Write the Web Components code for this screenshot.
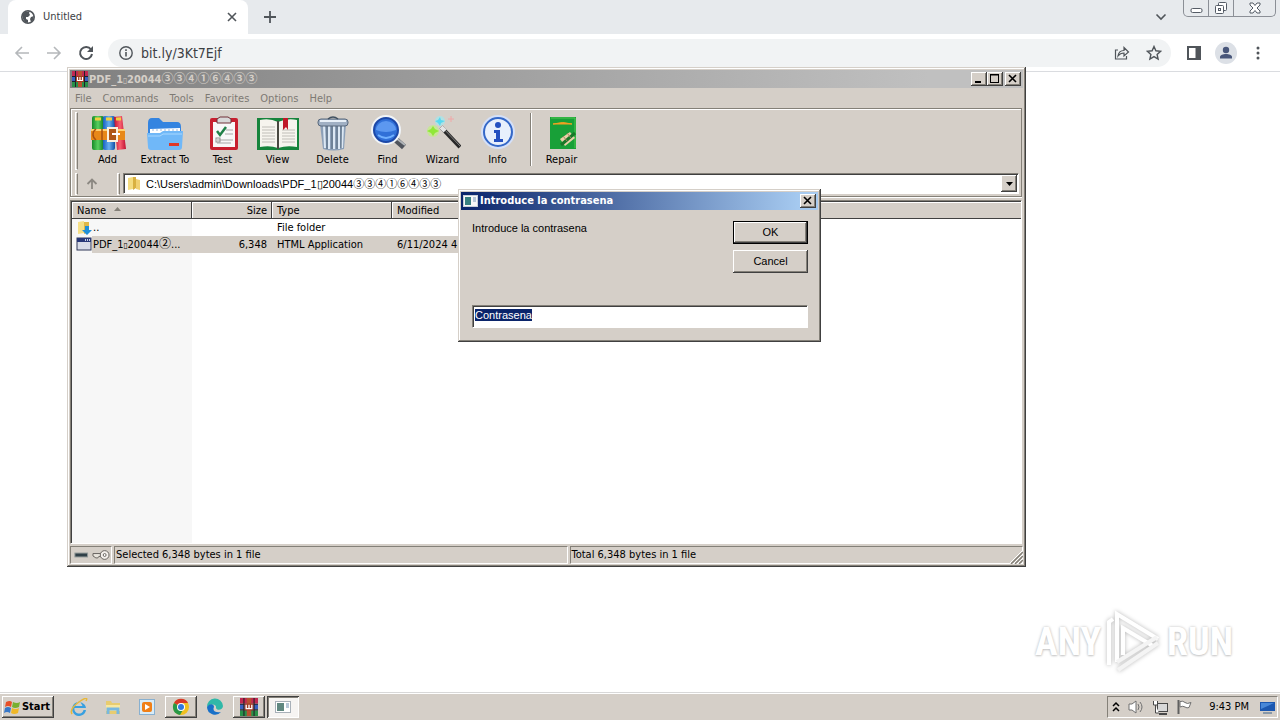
<!DOCTYPE html>
<html lang="en">
<head>
<meta charset="utf-8">
<title>Desktop</title>
<style>
  :root {
    --face: #d5cfc8;
    --shade: #848078;
    --dark: #404040;
    --ui: "DejaVu Sans Condensed", "Noto Sans", "Noto Sans CJK JP", sans-serif;
    --dialog: "Liberation Sans", Arial, sans-serif;
  }
  html, body { height: 100%; margin: 0; }
  body { font: 11px/14px var(--ui); color: #000; background: #fff; overflow: hidden; }
</style>
</head>
<body>
<desk-top>
  <browser-bar slot="browser"></browser-bar>
  <any-run></any-run>
  <archive-window></archive-window>
  <password-dialog></password-dialog>
  <task-bar slot="taskbar"></task-bar>
</desk-top>

<script>
const define = (name, html, ready) => {
  const t = document.createElement('template');
  t.innerHTML = html;
  customElements.define(name, class extends HTMLElement {
    constructor() {
      super();
      this.attachShadow({ mode: 'open' }).append(t.content.cloneNode(true));
    }
    connectedCallback() { if (ready) ready(this, this.shadowRoot); }
  });
};

const raised = 'box-shadow: inset -1px -1px var(--dark), inset 1px 1px #fff, inset -2px -2px var(--shade);';
const books = (size) => `<svg width="${size}" height="${size}" viewBox="0 0 16 16" aria-hidden="true">
  <path d="M0 0h16v5H0z" fill="#c02850"/><path d="M0 5.500h16v4.500H0z" fill="#3860c0"/><path d="M0 11h16v5H0z" fill="#289048"/>
  <path d="M0 5.500h16M0 10.500h16" stroke="#182030"/><path d="M3.500 0v16M12.500 0v16" stroke="#202028"/><path d="M6 0h4v16H6z" fill="#b85030"/><path d="M4 5h8v6H4z" fill="#a03820"/><path d="M5.500 6v3.500h5V6M8 6v3" stroke="#fff" stroke-width="1.200" fill="none"/></svg>`;

define('desk-top', `
<style>
  :host { display: flex; flex-direction: column; position: relative; height: 100%; min-height: 600px; }
  .work { flex: 1; }
</style>
<slot name="browser"></slot><main class="work"><slot></slot></main><slot name="taskbar"></slot>`);

define('browser-bar', `
<style>
  :host { display: block; color: #3c4043; border-bottom: 1px solid #dadce0; }
  button { border: 0; padding: 0; background: none; display: grid; place-items: center; }
  .tabs { display: flex; align-items: stretch; height: 34px; background: #e7eaed; padding-left: 8px; }
  .tab { flex: 0 1 240px; display: flex; align-items: center; gap: 8px; box-sizing: border-box; padding: 0 10px 0 13px; background: #fff; border-radius: 8px 8px 0 0; }
  .tab span { flex: 1; }
  .add { width: 44px; }
  .spacer { flex: 1; }
  .list { width: 44px; }
  .controls { display: flex; align-self: flex-start; height: 16px; margin: 0 4px 0 0; border: 1px solid #8b8f96; border-top: 0; border-radius: 0 0 5px 5px; }
  .controls button { width: 25px; height: 16px; border-right: 1px solid #8b8f96; }
  .controls button:last-child { width: 41px; border: 0; }
  .bar { display: flex; align-items: center; height: 37px; padding: 0 6px 0 10px; }
  .nav { width: 24px; height: 28px; margin-right: 8px; }
  .omni { flex: 1; display: flex; align-items: center; height: 28px; border-radius: 14px; background: #f1f3f4; margin: 0 7px 0 2px; padding: 0 1px 0 10px; }
  .omni input { flex: 1; min-width: 0; border: 0; outline: 0; background: none; padding: 0 0 0 7px; font: 14px/20px var(--ui); color: #3c4043; }
  .omni button { width: 32px; }
  .tool { width: 32px; height: 28px; }
</style>
<nav class="tabs">
  <div class="tab">
    <svg width="14" height="14" viewBox="0 0 14 14"><circle cx="7" cy="7" r="6.200" fill="#fff" stroke="#50555a" stroke-width="1.600"/><path d="M1 5l3-3 5-1-1 2 1 2-2 2H5v2l2 1v3l-3-1-2-3zM13 6l-3 1-1 2 1 3 2-2z" fill="#50555a"/></svg>
    <span>Untitled</span>
    <button aria-label="Close tab"><svg width="12" height="12" viewBox="0 0 12 12"><path d="M2 2l8 8M10 2l-8 8" stroke="#50555a" stroke-width="1.600"/></svg></button>
  </div>
  <button class="add" aria-label="New tab"><svg width="14" height="14" viewBox="0 0 14 14"><path d="M7 1v12M1 7h12" stroke="#50555a" stroke-width="1.800"/></svg></button>
  <div class="spacer"></div>
  <button class="list" aria-label="Search tabs"><svg width="12" height="8" viewBox="0 0 12 8"><path d="M1.500 1.500L6 6l4.500-4.500" fill="none" stroke="#50555a" stroke-width="1.600"/></svg></button>
  <div class="controls">
    <button aria-label="Minimize"><svg width="13" height="12" viewBox="0 0 13 12"><rect x="1" y="6.500" width="11" height="4" rx="1.500" fill="#fff" stroke="#555c66"/></svg></button>
    <button aria-label="Restore"><svg width="14" height="14" viewBox="0 0 14 14"><rect x="4.500" y="1.500" width="8" height="8" rx="1" fill="#fff" stroke="#555c66"/><rect x="1.500" y="4.500" width="8" height="8" rx="1" fill="#fff" stroke="#555c66"/><rect x="4.500" y="7.500" width="2" height="2" fill="#fff" stroke="#555c66"/></svg></button>
    <button aria-label="Close"><svg width="14" height="12" viewBox="0 0 14 12"><path d="M2 1h3l2 2.500L9 1h3v2L9 6l3 3v2H9L7 8.500 5 11H2V9l3-3-3-3z" fill="#fff" stroke="#555c66"/></svg></button>
  </div>
</nav>
<div class="bar">
  <button class="nav" aria-label="Back"><svg width="16" height="16" viewBox="0 0 16 16"><path d="M15 8H2M8 2L2 8l6 6" fill="none" stroke="#b5b8bb" stroke-width="1.600"/></svg></button>
  <button class="nav" aria-label="Forward"><svg width="16" height="16" viewBox="0 0 16 16"><path d="M1 8h13M8 2l6 6-6 6" fill="none" stroke="#b5b8bb" stroke-width="1.600"/></svg></button>
  <button class="nav" aria-label="Reload"><svg width="16" height="16" viewBox="0 0 16 16"><path d="M13 4.500A6 6 0 1 0 14 9" fill="none" stroke="#50555a" stroke-width="2"/><path d="M15 1v6H9z" fill="#50555a"/></svg></button>
  <div class="omni">
    <svg width="16" height="16" viewBox="0 0 16 16"><circle cx="8" cy="8" r="6.200" fill="none" stroke="#50555a" stroke-width="1.400"/><path d="M8 7v4.500M8 4.300v1.600" stroke="#50555a" stroke-width="1.600"/></svg>
    <input aria-label="Address" value="bit.ly/3Kt7Ejf">
    <button aria-label="Share"><svg width="16" height="16" viewBox="0 0 16 16"><path d="M4 5H1.500v9h11v-3" fill="none" stroke="#50555a" stroke-width="1.200"/><path d="M4 11c.5-4 3-5.500 6-5.500V2.500L14.500 7 10 11V8c-3 0-4.500 1-6 3z" fill="none" stroke="#50555a" stroke-width="1.200"/></svg></button>
    <button aria-label="Bookmark"><svg width="16" height="16" viewBox="0 0 16 16"><path d="M8 1.500l1.900 4.300 4.700.5-3.500 3.100 1 4.600L8 11.600 3.900 14l1-4.600L1.400 6.300l4.700-.5z" fill="none" stroke="#50555a" stroke-width="1.400"/></svg></button>
  </div>
  <button class="tool" aria-label="Side panel"><svg width="14" height="14" viewBox="0 0 14 14"><rect x="1" y="1" width="12" height="12" fill="#fff" stroke="#50555a" stroke-width="2"/><path d="M8.500 1H13v12H8.500z" fill="#50555a"/></svg></button>
  <button class="tool" aria-label="Profile"><svg width="22" height="22" viewBox="0 0 22 22"><circle cx="11" cy="11" r="11" fill="#dce0e6"/><circle cx="11" cy="8" r="3.200" fill="#48567a"/><path d="M5 16.500v-1.500c0-4 12-4 12 0v1.500z" fill="#48567a"/></svg></button>
  <button class="tool" aria-label="Menu"><svg width="4" height="16" viewBox="0 0 4 16"><g fill="#50555a"><circle cx="2" cy="3" r="1.500"/><circle cx="2" cy="8" r="1.500"/><circle cx="2" cy="13" r="1.500"/></g></svg></button>
</div>`);

define('caption-button', `
<style>
  :host { display: block; }
  button { display: grid; place-items: center; width: 16px; height: 14px; padding: 0 1px 1px 0; border: 0; background: var(--face); ${raised} }
</style>
<button><svg width="9" height="9" viewBox="0 0 9 9"><path fill="none" stroke="#000"/></svg></button>`,
(el, root) => {
  const kind = el.getAttribute('kind');
  const p = root.querySelector('path');
  p.setAttribute('d', { min: 'M1 8h6', max: 'M0 1h9M.5 0v9M8.500 0v9M0 8.500h9M0 .5h9', close: 'M1 1l7 7M8 1l-7 7' }[kind]);
  p.setAttribute('stroke-width', { min: '2', max: '1', close: '1.600' }[kind]);
  root.querySelector('button').setAttribute('aria-label', kind);
});

define('title-bar', `
<style>
  :host { display: flex; align-items: center; height: 18px; padding-right: 2px; color: #d5cfc8; background: linear-gradient(90deg, #808080, #c0c0c0 90%); font-weight: bold; }
  :host([active]) { color: #fff; background: linear-gradient(90deg, #0a246a, #a6caf0 95%); }
  .text { flex: 1; display: flex; align-items: center; white-space: nowrap; }
  .buttons { display: flex; }
</style>
<slot name="icon"></slot><div class="text"><slot></slot></div><div class="buttons"><slot name="buttons"></slot></div>`);

define('file-name', `
<style>
  :host { display: inline-block; white-space: nowrap; }
  .box { font-size: 8px; }
  .num { font-family: "Noto Sans CJK JP", sans-serif; font-size: 12px; line-height: 14px; }
</style>
PDF_1<span class="box">▯</span>20044<span class="num"></span><slot></slot>`,
(el, root) => { root.querySelector('.num').textContent = el.getAttribute('digits'); });

define('tool-button', `
<style>
  :host { display: block; width: 55px; }
  :host([wide]) { width: 60px; }
  button { width: 100%; padding: 0; border: 0; background: none; font: 11px/14px var(--ui); display: grid; justify-items: center; gap: 2px; white-space: nowrap; color: #000; }
  ::slotted(svg) { display: block; width: 36px; height: 36px; }
  :host([large]) ::slotted(svg) { width: 44px; }
</style>
<button><slot></slot><span></span></button>`,
(el, root) => { root.querySelector('span').textContent = el.getAttribute('label'); });

define('tool-strip', `
<style>
  :host { display: flex; height: 62px; padding-left: 4px; box-sizing: border-box; align-items: flex-start; }
  .grip { width: 1px; height: 56px; margin-top: 3px; border: 1px solid; border-color: #fff var(--shade) #fff #fff; box-sizing: content-box; margin-right: 2px; }
  .sep { width: 1px; height: 53px; margin: 4px 2px 0 5px; background: var(--shade); border-right: 1px solid #fff; }
  tool-button { margin-top: 6px; }
</style>
<div class="grip"></div>
<tool-button label="Add"><svg viewBox="0 0 36 36">
  <defs><linearGradient id="g1"><stop stop-color="#168a28"/><stop offset=".5" stop-color="#58d060"/><stop offset="1" stop-color="#107820"/></linearGradient><linearGradient id="g2"><stop stop-color="#1860c0"/><stop offset=".5" stop-color="#68b0f0"/><stop offset="1" stop-color="#1050a8"/></linearGradient><linearGradient id="g3"><stop stop-color="#c01030"/><stop offset=".5" stop-color="#f86070"/><stop offset="1" stop-color="#c01030"/></linearGradient></defs>
  <rect x="2" y="1" width="12" height="34" rx="2" fill="url(#g1)"/><rect x="13" y="1" width="12" height="34" rx="2" fill="url(#g2)"/><path d="M24 2l8-1 4 33-9 1z" fill="url(#g3)"/><path d="M5 4h6M16 4h6M26 4h5" stroke="#f0d040" stroke-width="3"/>
  <path d="M1 14h34v11H1z" fill="#e88818"/><path d="M1 15h34" stroke="#ffd070" stroke-width="2"/><path d="M6 14c-4 3-4 8 0 11M12 14v11" stroke="#a85010" stroke-width="1.500" fill="none"/><rect x="18" y="13" width="9" height="13" fill="#b05818" stroke="#f8f0e0" stroke-width="2"/><path d="M22 19h8" stroke="#fff" stroke-width="2"/></svg></tool-button>
<tool-button wide label="Extract To"><svg viewBox="0 0 36 36"><path d="M1 8q0-5 4-5h7l4 4h14q4 0 4 5v20H1z" fill="#3484e0"/><path d="M3 14l30-1v14H3z" fill="#fff"/><path d="M5 15h26" stroke="#98b8e0" stroke-dasharray="2 2"/><path d="M0 18h13l3-2h20l-1 16q0 3-3 3H4q-3 0-3-3z" fill="#70b8f8"/><path d="M1 21h12l3-2h19" fill="none" stroke="#a8d8ff"/><rect x="22" y="28" width="10" height="3" fill="#e03828"/></svg></tool-button>
<tool-button label="Test"><svg viewBox="0 0 36 36"><rect x="5" y="3" width="28" height="32" rx="2" fill="#c82030"/><path d="M8 7h22v25H8z" fill="#f8f8f8"/><path d="M12 4l3-2h8l3 2v4H12z" fill="#d8d8d8" stroke="#703038"/><path d="M12 16l3 4 6-8" fill="none" stroke="#208048" stroke-width="2.500"/><path d="M21 15h7M20 19h8M12 25h16M12 28h14" stroke="#a8a8a8"/><rect x="11" y="23" width="4" height="4" fill="none" stroke="#909090"/></svg></tool-button>
<tool-button large label="View"><svg viewBox="0 0 44 36"><path d="M1 3h42v32H1z" fill="#16843c"/><path d="M4 5q10-2 18 2v26q-8-3-18-1zM41 5q-10-2-19 2v26q9-3 19-1z" fill="#f6f4ee"/><path d="M22 6v28" stroke="#484840" stroke-width="2"/><path d="M6 12h13M6 15h13M6 18h13M6 21h13M6 24h13M6 27h13M26 15h13M26 18h13M26 21h13M26 24h13M26 27h13" stroke="#c0beb8"/><path d="M27 3h5v12l-2-3-3 3z" fill="#c01828"/></svg></tool-button>
<tool-button label="Delete"><svg viewBox="0 0 36 36"><path d="M5 9h26l-2 25q-11 3-21 0z" fill="#8ca0b8"/><path d="M9 11l1 22M14 11v23M19 11v23M24 11v23M28 11l-1 22" stroke="#dce8f4" stroke-width="2"/><path d="M12 11v23M17 11v23M22 11v23M26 11v22" stroke="#506478"/><rect x="3" y="4" width="30" height="7" rx="3" fill="#a0b0c4" stroke="#58687c"/><path d="M5 6h26" stroke="#e8f0f8" stroke-width="2"/><path d="M13 4q5-4 10 0" fill="none" stroke="#405060" stroke-width="1.500"/></svg></tool-button>
<tool-button label="Find"><svg viewBox="0 0 36 36"><path d="M25 24l9 8" stroke="#50545c" stroke-width="6"/><path d="M26 23l9 7" stroke="#b0b4b8" stroke-width="2"/><circle cx="16" cy="15" r="13.500" fill="#2868d8" stroke="#f0f4f8" stroke-width="3"/><circle cx="16" cy="15" r="12" fill="#3070d8" stroke="#1c48a8" stroke-width="2"/><path d="M6 15a10 9 0 0 1 20 0q-10 4-20 0" fill="#5c98f0"/><path d="M8 20q8 6 16 0" stroke="#70b0ff" stroke-width="2" fill="none"/></svg></tool-button>
<tool-button label="Wizard"><svg viewBox="0 0 36 36"><circle cx="15" cy="6" r="5" fill="#a0e8f0" opacity=".7"/><path d="M15 2l1 3 4 1-4 2-1 3-2-3-3-2 3-1z" fill="#58d8f0"/><circle cx="8" cy="16" r="6" fill="#c0f080" opacity=".7"/><path d="M8 11l2 3 4 2-4 2-2 3-2-3-4-2 4-2z" fill="#90e838"/><path d="M26 1v6M23 4h6" stroke="#f0a8a8"/><path d="M16 12l19 20" stroke="#282828" stroke-width="4"/><path d="M17 12l18 19" stroke="#808080"/><path d="M16 12l4 4" stroke="#e4e4e4" stroke-width="4"/></svg></tool-button>
<tool-button label="Info"><svg viewBox="0 0 36 36"><circle cx="18" cy="17" r="17" fill="#d4e0f8"/><circle cx="18" cy="17" r="14" fill="#e8f0fc" stroke="#3468c8" stroke-width="2"/><circle cx="18" cy="10" r="3" fill="#2450c0"/><path d="M14 15h6v9h3v3h-9v-3h2v-6h-2z" fill="#2450c0"/></svg></tool-button>
<div class="sep"></div>
<tool-button label="Repair"><svg viewBox="0 0 36 36"><path d="M6 2h26v32H6z" fill="#18a038"/><path d="M7 3h24v30" fill="none" stroke="#50c850"/><path d="M9 9q10-3 19 0z" fill="#f0a020" stroke="#f0a020"/><path d="M16 24l10-7 5 6-10 8z" fill="#e8d0a8"/><path d="M17 30l14-12" stroke="#187828" stroke-width="3"/><path d="M19 21l4 5M23 18l4 5" stroke="#a08060"/></svg></tool-button>`);

define('address-strip', `
<style>
  :host { display: flex; align-items: center; height: 25px; padding: 0 2px 0 4px; }
  .grip { width: 1px; height: 20px; border: 1px solid; border-color: #fff var(--shade) #fff #fff; }
  .up { display: grid; place-items: center; width: 34px; height: 22px; padding: 0 6px 0 0; border: 0; background: none; }
  .up { box-sizing: border-box; margin-right: 5px; }
  .combo { flex: 1; display: flex; align-items: center; box-sizing: border-box; height: 21px; margin-left: 3px; padding: 2px 1px 2px 3px; background: #fff; border: 1px solid; border-color: var(--shade) #fff #fff var(--shade); box-shadow: inset 1px 1px var(--dark); }
  input { flex: 1; min-width: 0; border: 0; outline: 0; padding: 0 0 0 5px; background: none; font: 11px/16px "Liberation Sans", "Noto Sans CJK JP", sans-serif; }
  .drop { width: 16px; height: 17px; padding: 0; border: 0; background: var(--face); display: grid; place-items: center; ${raised} }
</style>
<div class="grip"></div>
<button class="up" aria-label="Up one level"><svg width="14" height="14" viewBox="0 0 14 14"><path d="M7 12V3M2.500 7L7 2.500 11.500 7" fill="none" stroke="#8c8882" stroke-width="1.800"/></svg></button>
<div class="grip"></div>
<div class="combo">
  <svg width="14" height="15" viewBox="0 0 14 15"><path d="M1 2l5-1v12l-5 1z" fill="#f4dc80"/><path d="M6 1h3v11l-3 2z" fill="#d8b040"/><path d="M9 3l4 1v10l-4-1z" fill="#f0d070"/></svg>
  <input aria-label="Path" value="C:\\Users\\admin\\Downloads\\PDF_1▯20044③③④①⑥④③③">
  <button class="drop" aria-label="Show paths"><svg width="7" height="4" viewBox="0 0 7 4"><path d="M0 0h7L3.500 4z"/></svg></button>
</div>`);

define('file-list', `
<style>
  :host { display: block; overflow: hidden; border: 1px solid; border-color: var(--shade) #fff #fff var(--shade); background: linear-gradient(#f7f7f7, #f7f7f7) 0 0 / 121px 100% no-repeat #fff; box-shadow: inset 1px 1px var(--dark); padding: 1px 0 0 1px; }
  table { width: 100%; border-collapse: separate; border-spacing: 0; table-layout: fixed; }
  th { box-sizing: border-box; height: 17px; padding: 2px 5px 0; text-align: left; font-weight: normal; line-height: 14px; background: var(--face); border-bottom: 1px solid var(--dark); box-shadow: inset -1px 0 var(--dark), inset 1px 1px #fff; }
  th:last-child { box-shadow: inset 0 1px #fff; }
  td { height: 17px; padding: 0 5px; line-height: 17px; white-space: nowrap; }
  td:first-child { padding: 0 0 0 4px; }
  td > div { display: flex; align-items: center; height: 17px; }
  .n { text-align: right; }
  .sel td { background: var(--face); }
  .sel td:first-child { background: linear-gradient(90deg, transparent 20px, var(--face) 20px); }
  .sel td:last-child { background: none; }
  th svg { margin: 0 0 3px 8px; }
</style>
<table>
  <colgroup><col width="120"><col width="80"><col width="120"><col width="120"><col></colgroup>
  <thead><tr><th>Name<svg width="7" height="4" viewBox="0 0 7 4"><path d="M0 4h7L3.500 0z" fill="#848078"/></svg></th><th class="n">Size</th><th>Type</th><th>Modified</th><th></th></tr></thead>
  <tbody>
    <tr><td><div><svg width="17" height="16" viewBox="0 0 17 16"><path d="M2 2l6-1v12l-6 1z" fill="#f6e088"/><path d="M8 2h5v10l-5 2z" fill="#e0b848"/><path d="M9 6h4v4h3l-5 5-5-5h3z" fill="#2090d8"/></svg>..</div></td><td></td><td>File folder</td><td></td><td></td></tr>
    <tr class="sel"><td><div><svg width="17" height="16" viewBox="0 0 17 16"><rect x="1" y="1" width="14" height="12" fill="#d8dce8" stroke="#303858"/><path d="M1 1h14v4H1z" fill="#283878"/><path d="M9 3h5" stroke="#c8d0e8" stroke-width="2" stroke-dasharray="1 1"/></svg><file-name digits="②">...</file-name></div></td><td class="n">6,348</td><td>HTML Application</td><td>6/11/2024 4:41</td><td></td></tr>
  </tbody>
</table>`);

define('archive-window', `
<style>
  :host { display: flex; flex-direction: column; position: absolute; left: 67px; right: 254px; top: 67px; bottom: 153px; box-sizing: border-box; padding: 3px; background: var(--face); box-shadow: inset -1px -1px var(--dark), inset 1px 1px var(--face), inset -2px -2px var(--shade), inset 2px 2px #fff; }
  .pic { width: 16px; height: 16px; margin: 0 1px 0 2px; }
  menu { display: flex; box-sizing: border-box; height: 20px; margin: 0; padding: 2px 5px 0; align-items: center; gap: 11px; color: #7e7a74; list-style: none; }
  menu button { border: 0; padding: 0; background: none; font: inherit; color: inherit; }
  .bars { border: 1px solid var(--shade); box-shadow: inset 1px 1px #fff, 0 1px #fff; margin: 0 1px 3px 0; }
  file-list { flex: 1; min-height: 0; margin: 0 1px 0 0; }
  footer { display: grid; grid-template-columns: 42px 1fr 1fr; gap: 2px; height: 18px; margin-top: 2px; position: relative; }
  footer div { border: 1px solid; border-color: var(--shade) #fff #fff var(--shade); display: flex; align-items: center; padding: 0 1px; gap: 2px; }
  .size { position: absolute; right: 0; bottom: 0; }
  caption-button[kind=close] { margin-left: 2px; }
</style>
<title-bar><span slot="icon" class="pic">${books(16)}</span><file-name digits="③③④①⑥④③③"></file-name>
  <caption-button slot="buttons" kind="min"></caption-button><caption-button slot="buttons" kind="max"></caption-button><caption-button slot="buttons" kind="close"></caption-button></title-bar>
<menu><li><button>File</button></li><li><button>Commands</button></li><li><button>Tools</button></li><li><button>Favorites</button></li><li><button>Options</button></li><li><button>Help</button></li></menu>
<div class="bars"><tool-strip></tool-strip><address-strip></address-strip></div>
<file-list></file-list>
<footer>
  <div><svg width="18" height="12" viewBox="0 0 18 12"><rect x="3" y="4" width="13" height="4" fill="#304048" stroke="#909898"/></svg><svg width="19" height="12" viewBox="0 0 19 12"><path d="M1 4.500h9v3H7L6 9H4L1 7z" fill="#e8e4dc" stroke="#686460"/><circle cx="13" cy="6" r="4.500" fill="#f4f0ec" stroke="#686460"/><circle cx="13" cy="6" r="1.500" fill="#fff" stroke="#686460"/></svg></div>
  <div>Selected 6,348 bytes in 1 file</div><div>Total 6,348 bytes in 1 file</div>
  <svg class="size" width="13" height="13" viewBox="0 0 13 13"><path d="M1 13L13 1M5 13l8-8M9 13l4-4" stroke="#848078" stroke-width="1.500"/><path d="M0 12L12 0M4 12l8-8M8 12l4-4" stroke="#fff"/></svg>
</footer>`);

define('password-dialog', `
<style>
  :host { display: block; position: absolute; left: 458px; top: 189px; width: 363px; box-sizing: border-box; padding: 3px; background: var(--face); box-shadow: inset -1px -1px var(--dark), inset 1px 1px var(--face), inset -2px -2px var(--shade), inset 2px 2px #fff; }
  .pic { display: block; height: 14px; margin: 0 2px; }
  form { padding: 11px 10px 11px 11px; font: 11px/14px var(--dialog); }
  .top { display: flex; justify-content: space-between; align-items: flex-start; }
  .buttons { display: grid; gap: 6px; }
  .buttons button { width: 75px; height: 23px; padding: 0 0 2px; border: 0; background: var(--face); font: inherit; color: #000; ${raised} }
  .buttons .ok { border: 1px solid #000; }
  input { display: block; width: 100%; box-sizing: border-box; height: 23px; margin-top: 32px; padding: 0 2px 3px; border: 1px solid; border-color: var(--shade) #fff #fff var(--shade); box-shadow: inset 1px 1px var(--dark); outline: 0; background: #fff; font: inherit; }
  input::selection { background: #0a246a; color: #fff; }
</style>
<title-bar active><svg slot="icon" class="pic" width="15" height="14" viewBox="0 0 15 14"><rect x=".5" y="1.500" width="14" height="11" fill="#f8f8f8" stroke="#c8d0d8"/><rect x="2" y="3" width="6" height="8" fill="#388080"/><rect x="10" y="3" width="3" height="5" fill="#b8c8d8"/></svg>Introduce la contrasena<caption-button slot="buttons" kind="close"></caption-button></title-bar>
<form>
  <div class="top"><label for="pw">Introduce la contrasena</label><div class="buttons"><button type="button" class="ok">OK</button><button type="button">Cancel</button></div></div>
  <input id="pw" value="Contrasena">
</form>`,
(el, root) => { const i = root.getElementById('pw'); i.focus(); i.select(); });

define('any-run', `
<style>
  :host { display: flex; align-items: center; gap: 4px; position: absolute; right: 47px; bottom: 46px; color: #fff; font: bold 38px/60px "Liberation Sans Narrow", "Roboto Condensed", "Roboto", sans-serif; text-shadow: 0 0 3px #c0c0c0, 0 1px 2px #d0d0d0; }
  svg { filter: drop-shadow(0 0 2px #b8b8b8); }
</style>
<span>ANY</span>
<svg width="58" height="64" viewBox="0 0 58 64"><path d="M4 55V12l4-3" fill="none" stroke="#fff" stroke-width="4"/><path d="M12 52V4l41 25" fill="none" stroke="#fff" stroke-width="4"/><path d="M18 45V18l30 18" fill="none" stroke="#fff" stroke-width="4"/><path d="M12 52l40-25M13 60l40-27" stroke="#f4f4f4" stroke-width="4"/></svg>
<span>RUN</span>`);

define('task-bar', `
<style>
  :host { display: flex; align-items: center; box-sizing: border-box; height: 27px; padding: 2px 2px 1px 2px; background: var(--face); box-shadow: 0 -1px #d8d8d8, inset 0 1px #fff; }
  button { display: grid; place-items: center; padding: 0; border: 0; background: none; height: 22px; width: 34px; }
  .start { display: flex; align-items: center; justify-content: center; gap: 1px; width: 52px; margin-right: 8px; padding-right: 2px; background: var(--face); font: bold 11px/16px var(--ui); ${raised} }
  .open { width: 32px; background: var(--face); margin: 0 1px; ${raised} }
  .now { width: 32px; background: #f6f4f2; margin: 0 1px; box-shadow: inset 1px 1px var(--dark), inset -1px -1px #fff, inset 2px 2px var(--shade); }
  .tray { display: flex; align-items: center; gap: 8px; margin-left: auto; height: 20px; padding: 0 1px 0 4px; border: 1px solid; border-color: var(--shade) #fff #fff var(--shade); }
  time { margin: 0 2px 0 9px; }
</style>
<button class="start"><svg width="17" height="16" viewBox="0 0 17 16"><path d="M2 3q4-2 6 0L7 8Q4 6 1 8z" fill="#e85028"/><path d="M9 3q4 2 7 0l-1 5q-4 2-7 0z" fill="#78b030"/><path d="M1 9q3-2 6 0l-1 5q-3-2-6 0z" fill="#3878c8"/><path d="M8 9q4 2 7 0l-1 5q-4 2-7 0z" fill="#f0b828"/></svg>Start</button>
<button aria-label="Internet Explorer"><svg width="18" height="18" viewBox="0 0 18 18"><path d="M15 10H4.500a4.500 4.500 0 0 0 9 2H16A7 7 0 1 1 16 10zM5 8h7.500Q9-.5 5 8" fill="#38a0e0" fill-rule="evenodd"/><path d="M2 16Q-1 11 9 4t7-1" fill="none" stroke="#e8b838" stroke-width="1.500"/></svg></button>
<button aria-label="Explorer"><svg width="18" height="18" viewBox="0 0 18 18"><path d="M2 3h5l1 2h8v11H2z" fill="#e8cc70"/><path d="M2 7h14v6H2z" fill="#f8e8a0"/><path d="M4 16v-5h10v5" fill="none" stroke="#78b8e0" stroke-width="3"/></svg></button>
<button aria-label="Media Player"><svg width="16" height="18" viewBox="0 0 16 18"><rect x=".5" y="1.500" width="15" height="15" fill="#d8ecf8" stroke="#88b0d0"/><rect x="3" y="4" width="10" height="10" rx="2" fill="#f08018"/><path d="M6 6l5 3-5 3z" fill="#fff"/></svg></button>
<button class="open" aria-label="Chrome"><svg width="18" height="18" viewBox="0 0 18 18"><circle cx="9" cy="9" r="8" fill="#f0c020"/><path d="M9 9L2 5a8 8 0 0 1 14 0H9z" fill="#d83828"/><path d="M9 9L2 5a8 8 0 0 0 6 12l4-7z" fill="#289848"/><circle cx="9" cy="9" r="4" fill="#fff"/><circle cx="9" cy="9" r="3" fill="#3078e0"/></svg></button>
<button aria-label="Edge"><svg width="18" height="18" viewBox="0 0 18 18"><path d="M1 9a8 8 0 0 1 16-1c0 4-6 5-7 2 1-4-5-5-9-1z" fill="#30b8a8"/><path d="M1 9c3-4 7-3 7 0-2 4 2 6 7 5A8 8 0 0 1 1 9z" fill="#1870c8"/></svg></button>
<button class="open" aria-label="WinRAR">${books(18)}</button>
<button class="now" aria-label="Introduce la contrasena"><svg width="16" height="14" viewBox="0 0 16 14"><rect x=".5" y="1.500" width="15" height="11" fill="#fff" stroke="#a8b0b8"/><rect x="2" y="3" width="7" height="8" fill="#608880"/><rect x="11" y="3" width="3" height="5" fill="#b8c8d8"/></svg></button>
<div class="tray">
  <svg width="8" height="12" viewBox="0 0 8 12"><path d="M1 5l3-3 3 3M1 10l3-3 3 3" fill="none" stroke="#000" stroke-width="1.500"/></svg>
  <svg width="16" height="16" viewBox="0 0 16 16"><path d="M1 5h3l4-3v12l-4-3H1z" fill="#fff" stroke="#707070"/><path d="M10 5q2 3 0 6M12 3q4 5 0 10" fill="none" stroke="#707070"/></svg>
  <svg width="16" height="16" viewBox="0 0 16 16"><rect x="5.500" y="4.500" width="10" height="8" fill="#d8d8d8" stroke="#484848"/><path d="M7 15h8" stroke="#484848" stroke-width="2"/><path d="M1.500 2v4h4V2M3.500 6v8H7" fill="#fff" stroke="#484848"/></svg>
  <svg width="16" height="16" viewBox="0 0 16 16"><path d="M2.500 1v14" stroke="#606060" stroke-width="2"/><path d="M4 2.500q3-1 5 1t6 0l-2 5q-2 1-4-.5t-5 0z" fill="#fff" stroke="#707070"/></svg>
  <time>9:43 PM</time>
  <svg width="17" height="16" viewBox="0 0 17 16"><path d="M1 3h15v9H1z" fill="#1c58b0"/><path d="M2 4h13L2 10z" fill="#4888d8"/><path d="M4 13h9v2H4z" fill="#8898a8"/></svg>
</div>`);
</script>
</body>
</html>
